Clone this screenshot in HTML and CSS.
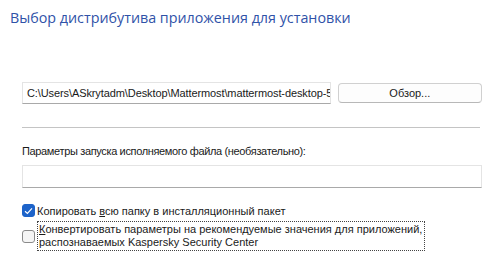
FILE: index.html
```html
<html>
<head>
  <meta charset="utf-8">
  <link rel="stylesheet" href="styles.css">
</head>
<body>
  <h1 class="title">Выбор дистрибутива приложения для установки</h1>

  <div class="content">
    <div class="path-row">
      <div class="field path">C:\Users\ASkrytadm\Desktop\Mattermost\mattermost-desktop-5</div>
      <div class="button">Обзор...</div>
    </div>

    <div class="separator"></div>

    <div class="label">Параметры запуска исполняемого файла (необязательно):</div>
    <div class="field params"></div>

    <div class="check-row first">
      <span class="box checked">
        <svg width="9" height="8" viewBox="0 0 9 8"><path d="M1 4.2 L3.4 6.4 L8 1.4" fill="none" stroke="#fff" stroke-width="1.2"/></svg>
      </span>
      <span class="check-text">Копировать <u>в</u>сю папку в инсталляционный пакет</span>
    </div>

    <div class="check-row second">
      <span class="box"></span>
      <span class="check-text focus"><u>К</u>онвертировать параметры на рекомендуемые значения для приложений,<br>распознаваемых Kaspersky Security Center</span>
    </div>
  </div>
</body>
</html>
```

FILE: styles.css
```css
body {
  margin: 0;
  background: #ffffff;
  color: #1a1a1a;
  font-family: "Liberation Sans", Arial, sans-serif;
  font-size: 11px;
}

.title {
  margin: 0;
  padding: 8px 0 0 10px;
  height: 22px;
  font-family: "Open Sans", sans-serif;
  font-weight: normal;
  font-size: 14.3px;
  color: #2f52a8;
}

.content {
  padding: 52px 18px 0 22px;
}

.path-row {
  display: flex;
  align-items: center;
  gap: 7px;
}

.field {
  box-sizing: border-box;
  background: #ffffff;
  border: 1px solid #e4e4e4;
  border-bottom: 1px solid #a9a9a9;
}

.path {
  width: 310px;
  height: 22px;
  padding: 4px 2px 0 4px;
  overflow: hidden;
  white-space: nowrap;
  letter-spacing: -0.1px;
}

.button {
  box-sizing: border-box;
  width: 145px;
  height: 20px;
  line-height: 18px;
  text-align: center;
  border: 1px solid #d0d0d0;
  border-bottom-color: #b8b8b8;
  border-radius: 4px;
  background: #fdfdfd;
}

.separator {
  margin: 23px 2px 0 0;
  width: 458px;
  border-top: 1px solid #c4c4c4;
}

.label {
  margin-top: 17px;
  letter-spacing: -0.35px;
}

.params {
  margin-top: 8px;
  width: 460px;
  height: 23px;
}

.check-row {
  display: flex;
  align-items: flex-start;
  gap: 2px;
}

.check-row.first {
  margin-top: 16px;
  align-items: center;
}

.check-row.second {
  margin-top: 4px;
}

.box {
  box-sizing: border-box;
  width: 13px;
  height: 13px;
  border: 1px solid #8a8a8a;
  border-radius: 3px;
  background: #f5f5f5;
  display: flex;
  align-items: center;
  justify-content: center;
}

.box.checked {
  border-color: #1d63c9;
  background: #1d63c9;
}

.second .box {
  margin-top: 9px;
}

.check-text.focus {
  padding: 1px 2px 1px 1px;
  border: 1px dotted #444;
  line-height: 13px;
}
```
